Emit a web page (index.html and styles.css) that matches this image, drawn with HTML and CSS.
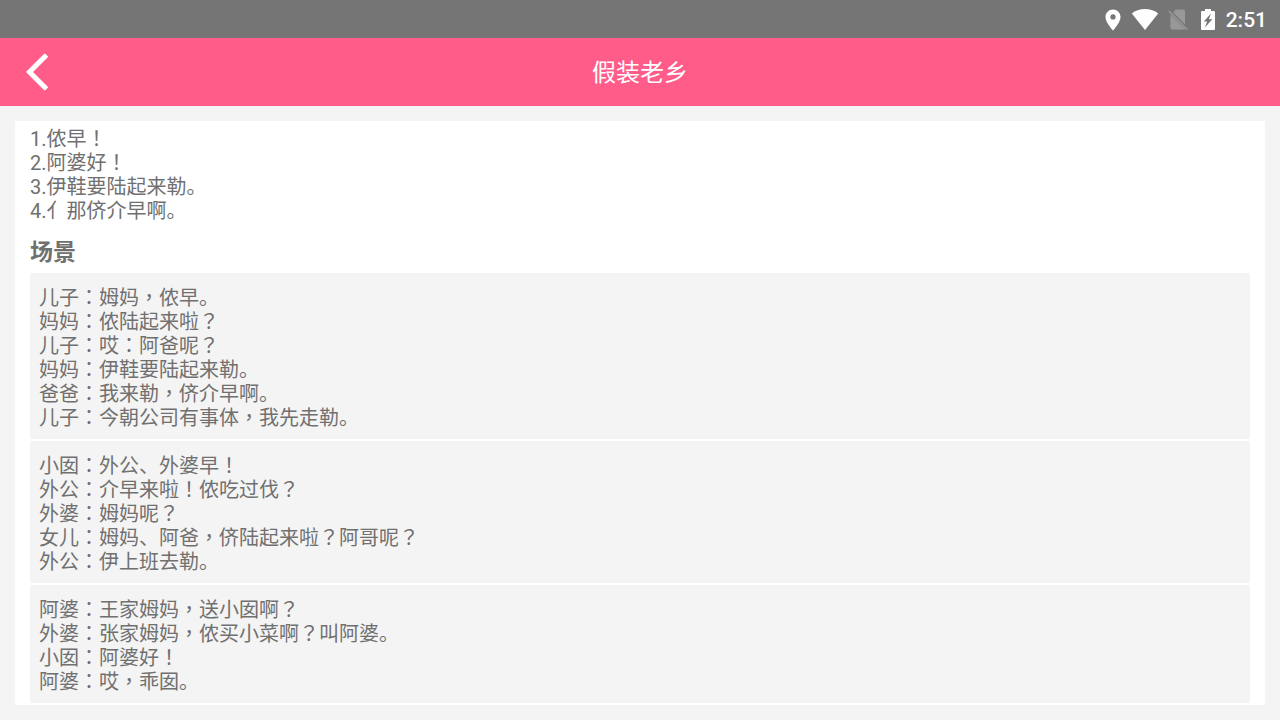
FILE: index.html
```html
<!DOCTYPE html>
<html lang="zh-CN">
<head>
    <meta charset="UTF-8">
    <meta name="viewport" content="width=device-width, initial-scale=1.0">
    <title>假装老乡</title>
    <link rel="stylesheet" href="styles.css">
</head>
<body>
    <div class="status-bar">
        <svg class="icon-location" width="16" height="22" viewBox="0 0 16 22">
            <path fill="#fff" fill-rule="evenodd" d="M8 0.500C3.800 0.500 0.500 3.800 0.500 7.900C0.500 13.300 8 21.500 8 21.500S15.500 13.300 15.500 7.900C15.500 3.800 12.200 0.500 8 0.500ZM8 5.300A2.600 2.600 0 1 1 8 10.500A2.600 2.600 0 1 1 8 5.300Z"/>
        </svg>
        <svg class="icon-wifi" width="28" height="22" viewBox="0 0 28 22">
            <path fill="#fff" d="M14 21L0.800 4.500C4.200 1.600 8.800 0 14 0S23.800 1.600 27.200 4.500Z"/>
        </svg>
        <svg class="icon-sim" width="20" height="22" viewBox="0 0 20 22">
            <path fill="#989898" d="M7.800 0.500H15.500Q17 0.500 17 2V15.400L5.300 3.500ZM2.400 5.400L16.900 20Q16.500 20.500 15.800 20.500H4.400Q2.400 20.500 2.400 18.500Z"/>
            <path stroke="#989898" stroke-width="1.600" d="M0.800 2L19.200 20.800"/>
        </svg>
        <svg class="icon-battery" width="16" height="22" viewBox="0 0 16 22">
            <path fill="#fff" fill-rule="evenodd" d="M5 0H11V2H14Q15 2 15 3V20Q15 21 14 21H2Q1 21 1 20V3Q1 2 2 2H5ZM11 4.500L3.800 12.500H7.200L4.800 18.500L12.400 10.300H8.900Z"/>
        </svg>
        <span class="time">2:51</span>
    </div>

    <header class="title-bar">
        <button type="button" class="back" aria-label="返回">
            <svg width="24" height="40" viewBox="0 0 24 40">
                <path fill="none" stroke="#fff" stroke-width="5" d="M21.500 3L4.500 20L21.500 37"/>
            </svg>
        </button>
        <h1>假装老乡</h1>
    </header>

    <main class="card">
        <div class="phrases">
            <div>1.侬早<i>！</i></div>
            <div>2.阿婆好<i>！</i></div>
            <div>3.伊鞋要陆起来勒。</div>
            <div>4.亻那侪介早啊。</div>
        </div>

        <h2>场景</h2>

        <div class="scenes">
            <div class="scene">
                <div>儿子<i>：</i>姆妈<i>，</i>侬早。</div>
                <div>妈妈<i>：</i>侬陆起来啦<i>？</i></div>
                <div>儿子<i>：</i>哎<i>：</i>阿爸呢<i>？</i></div>
                <div>妈妈<i>：</i>伊鞋要陆起来勒。</div>
                <div>爸爸<i>：</i>我来勒<i>，</i>侪介早啊。</div>
                <div>儿子<i>：</i>今朝公司有事体<i>，</i>我先走勒。</div>
            </div>
            <div class="scene">
                <div>小囡<i>：</i>外公、外婆早<i>！</i></div>
                <div>外公<i>：</i>介早来啦<i>！</i>侬吃过伐<i>？</i></div>
                <div>外婆<i>：</i>姆妈呢<i>？</i></div>
                <div>女儿<i>：</i>姆妈、阿爸<i>，</i>侪陆起来啦<i>？</i>阿哥呢<i>？</i></div>
                <div>外公<i>：</i>伊上班去勒。</div>
            </div>
            <div class="scene">
                <div>阿婆<i>：</i>王家姆妈<i>，</i>送小囡啊<i>？</i></div>
                <div>外婆<i>：</i>张家姆妈<i>，</i>侬买小菜啊<i>？</i>叫阿婆。</div>
                <div>小囡<i>：</i>阿婆好<i>！</i></div>
                <div>阿婆<i>：</i>哎<i>，</i>乖囡。</div>
            </div>
        </div>
    </main>
</body>
</html>
```

FILE: styles.css
```css
* {
    box-sizing: border-box;
}
body {
    margin: 0;
    background-color: #f4f4f4;
    color: #707070;
    font-family: Roboto, "Noto Sans CJK SC", sans-serif;
    font-size: 20px;
    line-height: 24px;
}
/* centered full-width punctuation */
i {
    font-family: "Noto Sans CJK TC", sans-serif;
    font-style: normal;
    line-height: 1;
    -webkit-locale: "zh-Hant";
}
.status-bar {
    display: flex;
    align-items: center;
    justify-content: flex-end;
    height: 38px;
    padding: 1px 13px 0;
    background-color: #757575;
}
.icon-location {
    margin-right: 10px;
}
.icon-wifi {
    margin-right: 9px;
}
.icon-sim {
    margin-right: 12px;
}
.icon-battery {
    margin-right: 10px;
}
.time {
    color: #fff;
    font-size: 21px;
    font-weight: 500;
}
.title-bar {
    display: grid;
    grid-template-columns: 76px 1fr 76px;
    align-items: center;
    height: 68px;
    background-color: #ff5c8a;
}
.back {
    display: flex;
    align-items: center;
    height: 68px;
    padding: 0 25px;
    border: none;
    background: none;
    cursor: pointer;
}
h1 {
    margin: 0;
    padding-top: 2px;
    color: #fff;
    font-size: 24px;
    font-weight: 400;
    text-align: center;
}
.card {
    margin: 15px;
    padding: 6px 15px 2px;
    background-color: #fff;
}
h2 {
    margin: 18px 0 8px;
    font-size: 23px;
    font-weight: 700;
}
.scenes {
    display: flex;
    flex-direction: column;
    gap: 2px;
}
.scene {
    padding: 13px 9px 9px;
    background-color: #f4f4f4;
}
```
